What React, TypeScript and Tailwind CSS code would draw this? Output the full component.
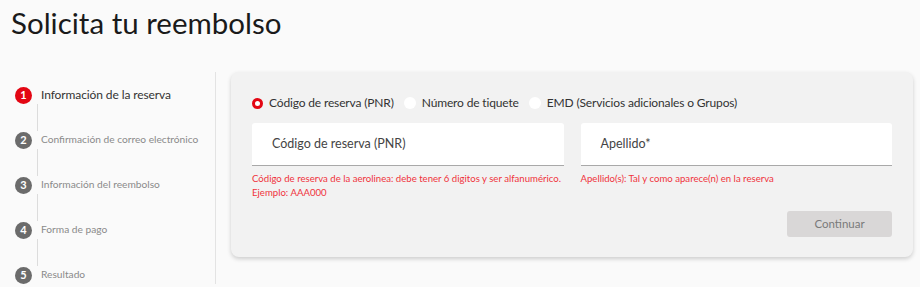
const steps = [
  "Información de la reserva",
  "Confirmación de correo electrónico",
  "Información del reembolso",
  "Forma de pago",
  "Resultado",
];

const options = [
  "Código de reserva (PNR)",
  "Número de tiquete",
  "EMD (Servicios adicionales o Grupos)",
];

function Stepper() {
  return (
    <ol className="w-[216px] shrink-0 pl-[15px] pt-[14px] border-r border-[#e3e3e3]">
      {steps.map((label, i) => {
        const active = i === 0;
        return (
          <li key={label}>
            <div className="flex items-center h-[18px] whitespace-nowrap">
              <span
                className={
                  active
                    ? "shrink-0 w-[17px] h-[17px] rounded-full bg-[#e30613] text-white text-[11px] font-bold flex items-center justify-center"
                    : "shrink-0 w-[17px] h-[17px] rounded-full bg-[#6b6b6b] text-white text-[11px] font-bold flex items-center justify-center"
                }
              >
                {i + 1}
              </span>
              <span
                className={
                  active
                    ? "ml-[9px] text-[12px] tracking-[-0.1px] text-[#333]"
                    : "ml-[9px] text-[10.2px] text-[#8a8a8a]"
                }
              >
                {label}
              </span>
            </div>
            {i < steps.length - 1 && (
              <div className="ml-[22px] w-px h-[27px] border-l border-[#dcdcdc]" />
            )}
          </li>
        );
      })}
    </ol>
  );
}

function Field({ label, hint }: { label: string; hint: React.ReactNode }) {
  return (
    <div className="flex-1 min-w-0">
      <div className="h-[43px] bg-white rounded-t-[3px] border-b border-[#a9a9a9] flex items-center pl-[20px] text-[12.5px] text-[#444]">
        {label}
      </div>
      <p className="mt-[6px] text-[9.6px] leading-[14px] text-[#f0323c] whitespace-nowrap">{hint}</p>
    </div>
  );
}

export default function App() {
  return (
    <div
      className="w-[920px] h-[287px] bg-[#fafafa] overflow-hidden"
      style={{ fontFamily: 'Lato, "Noto Sans", sans-serif' }}
    >
      <h1 className="pl-[11px] pt-[4px] h-[72px] text-[29.5px] leading-[38px] text-[#1a1a1a]">
        Solicita tu reembolso
      </h1>
      <div className="flex">
        <Stepper />
        <section className="ml-[15px] w-[682px] h-[185px] rounded-[8px] bg-[#f2f2f2] shadow-[0_2px_4px_rgba(0,0,0,0.18)] px-[21px] pt-[22px]">
          <div className="flex items-center gap-[10px] text-[12px] tracking-[-0.15px] text-[#333]">
            {options.map((opt, i) => (
              <label key={opt} className="flex items-center gap-[6px]">
                {i === 0 ? (
                  <span className="w-[11px] h-[11px] rounded-full border-[3px] border-[#e30613] bg-white" />
                ) : (
                  <span className="w-[12px] h-[12px] rounded-full bg-white" />
                )}
                {opt}
              </label>
            ))}
          </div>
          <div className="flex gap-[17px] mt-[11px]">
            <Field
              label="Código de reserva (PNR)"
              hint={
                <>
                  Código de reserva de la aerolinea: debe tener 6 digitos y ser alfanumérico.
                  <br />
                  Ejemplo: AAA000
                </>
              }
            />
            <Field label="Apellido*" hint="Apellido(s): Tal y como aparece(n) en la reserva" />
          </div>
          <div className="flex justify-end mt-[11px]">
            <button className="w-[105px] h-[26px] rounded-[3px] bg-[#d9d7d7] text-[11.5px] text-[#7a7a7a]">
              Continuar
            </button>
          </div>
        </section>
      </div>
    </div>
  );
}
